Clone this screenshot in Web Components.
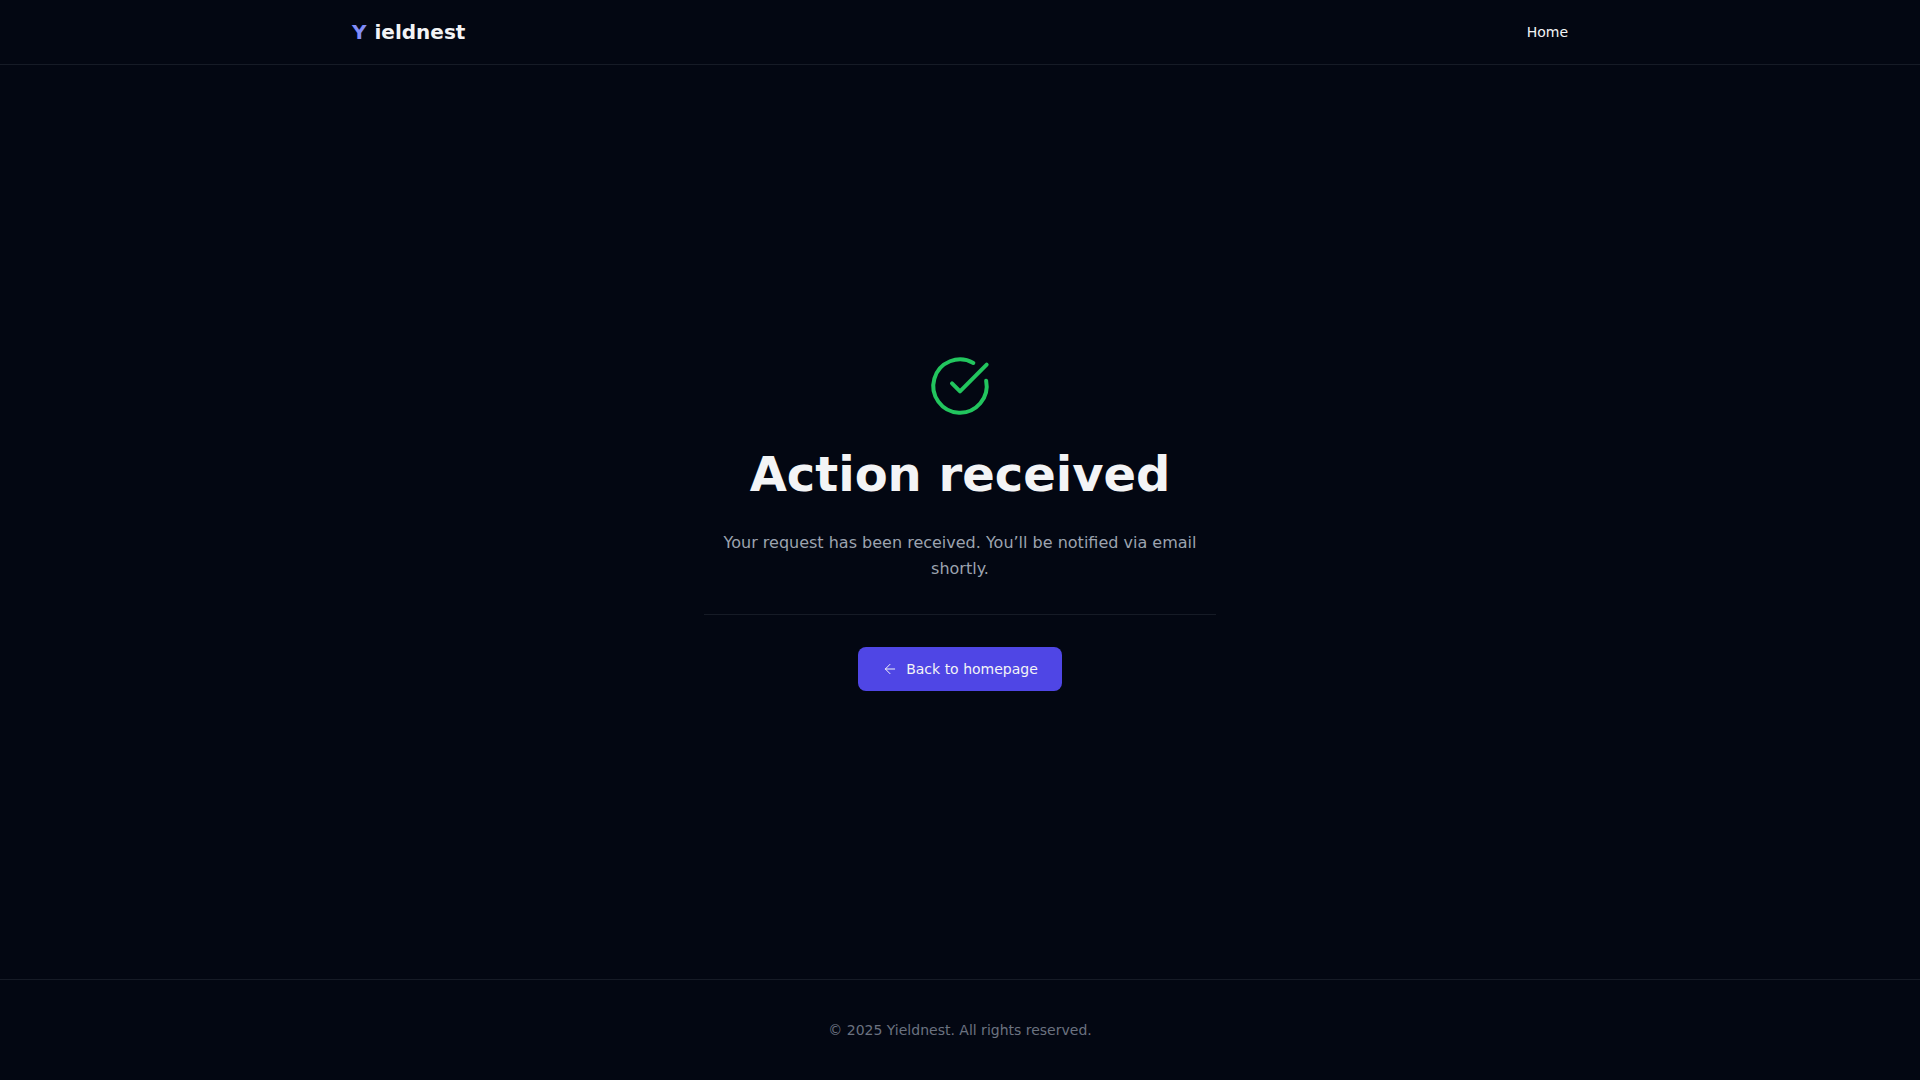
<!DOCTYPE html>
<html lang="en">
<head>
  <meta charset="utf-8">
  <meta name="viewport" content="width=device-width, initial-scale=1">
  <title>Action received - Yieldnest</title>
  <style>
    body {
      --bg: #030712;
      --text: #f3f4f6;
      --muted: #9ca3af;
      --subtle: #6b7280;
      --line: #161b26;
      --brand: #818cf8;
      --primary: #4f46e5;
      --success: #22c55e;
      margin: 0;
      background: var(--bg);
      color: var(--text);
      font-family: "DejaVu Sans", sans-serif;
      font-size: 16px;
    }
  </style>
</head>
<body>
  <page-layout>
    <site-header slot="header">
      <nav-link href="#home">Home</nav-link>
    </site-header>
    <status-message heading="Action received">
      <check-icon slot="icon"></check-icon>
      Your request has been received. You’ll be notified via email shortly.
      <back-button slot="action" href="#home">Back to homepage</back-button>
    </status-message>
    <site-footer slot="footer">© 2025 Yieldnest. All rights reserved.</site-footer>
  </page-layout>

  <script>
    class PageLayout extends HTMLElement {
      constructor() {
        super();
        this.attachShadow({ mode: "open" });
      }

      connectedCallback() {
        this.shadowRoot.innerHTML = /* html */ `
          <style>
            :host {
              display: flex;
              flex-direction: column;
              min-height: 100vh;
            }
            main {
              flex: 1;
              display: flex;
              align-items: center;
              justify-content: center;
              padding-inline: 24px;
            }
          </style>
          <slot name="header"></slot>
          <main><slot></slot></main>
          <slot name="footer"></slot>
        `;
      }
    }

    class SiteHeader extends HTMLElement {
      constructor() {
        super();
        this.attachShadow({ mode: "open" });
      }

      connectedCallback() {
        this.shadowRoot.innerHTML = /* html */ `
          <style>
            :host {
              display: block;
              border-bottom: 1px solid var(--line);
            }
            header {
              box-sizing: border-box;
              display: flex;
              align-items: center;
              justify-content: space-between;
              max-width: 1280px;
              height: 64px;
              margin-inline: auto;
              padding-inline: 32px;
            }
            .logo {
              display: flex;
              gap: 8px;
              color: inherit;
              font-size: 20px;
              line-height: 28px;
              font-weight: 700;
              text-decoration: none;
            }
            .logo span:first-child {
              color: var(--brand);
            }
          </style>
          <header>
            <a class="logo" href="#home"><span>Y</span><span>ieldnest</span></a>
            <nav><slot></slot></nav>
          </header>
        `;
      }
    }

    class NavLink extends HTMLElement {
      constructor() {
        super();
        this.attachShadow({ mode: "open" });
      }

      connectedCallback() {
        this.shadowRoot.innerHTML = /* html */ `
          <style>
            :host {
              display: block;
            }
            a {
              display: block;
              color: inherit;
              font-size: 14px;
              line-height: 20px;
              text-decoration: none;
            }
            a:hover {
              color: var(--brand);
            }
          </style>
          <a href="${this.getAttribute("href")}"><slot></slot></a>
        `;
      }
    }

    class StatusMessage extends HTMLElement {
      constructor() {
        super();
        this.attachShadow({ mode: "open" });
      }

      connectedCallback() {
        this.shadowRoot.innerHTML = /* html */ `
          <style>
            :host {
              display: block;
              width: 100%;
              max-width: 512px;
              text-align: center;
            }
            section {
              display: flex;
              flex-direction: column;
              align-items: center;
              gap: 32px;
            }
            h1, p, hr {
              margin: 0;
            }
            h1 {
              font-size: 48px;
              line-height: 48px;
              font-weight: 700;
            }
            p {
              color: var(--muted);
              line-height: 26px;
            }
            hr {
              align-self: stretch;
              border: 0;
              border-top: 1px solid var(--line);
            }
          </style>
          <section>
            <slot name="icon"></slot>
            <h1>${this.getAttribute("heading")}</h1>
            <p><slot></slot></p>
            <hr>
            <slot name="action"></slot>
          </section>
        `;
      }
    }

    class CheckIcon extends HTMLElement {
      constructor() {
        super();
        this.attachShadow({ mode: "open" });
      }

      connectedCallback() {
        this.shadowRoot.innerHTML = /* html */ `
          <style>
            :host {
              display: block;
              color: var(--success);
            }
            svg {
              display: block;
            }
          </style>
          <svg width="64" height="64" viewBox="0 0 24 24" fill="none" stroke="currentColor"
            stroke-width="1.5" stroke-linecap="round" stroke-linejoin="round" aria-hidden="true">
            <path d="M21.801 10A10 10 0 1 1 17 3.335"/>
            <path d="m9 11 3 3L22 4"/>
          </svg>
        `;
      }
    }

    class BackButton extends HTMLElement {
      constructor() {
        super();
        this.attachShadow({ mode: "open" });
      }

      connectedCallback() {
        this.shadowRoot.innerHTML = /* html */ `
          <style>
            :host {
              display: block;
            }
            a {
              display: flex;
              align-items: center;
              gap: 8px;
              padding: 12px 24px;
              border-radius: 8px;
              background: var(--primary);
              color: inherit;
              font-size: 14px;
              line-height: 20px;
              text-decoration: none;
            }
            a:hover {
              background: #6366f1;
            }
          </style>
          <a href="${this.getAttribute("href")}">
            <svg width="16" height="16" viewBox="0 0 24 24" fill="none" stroke="currentColor"
              stroke-width="1.5" stroke-linecap="round" stroke-linejoin="round" aria-hidden="true">
              <path d="m12 19-7-7 7-7"/>
              <path d="M19 12H5"/>
            </svg>
            <slot></slot>
          </a>
        `;
      }
    }

    class SiteFooter extends HTMLElement {
      constructor() {
        super();
        this.attachShadow({ mode: "open" });
      }

      connectedCallback() {
        this.shadowRoot.innerHTML = /* html */ `
          <style>
            :host {
              display: block;
              border-top: 1px solid var(--line);
            }
            footer {
              padding: 40px 24px;
              color: var(--subtle);
              font-size: 14px;
              line-height: 20px;
              text-align: center;
            }
          </style>
          <footer><slot></slot></footer>
        `;
      }
    }

    customElements.define("page-layout", PageLayout);
    customElements.define("site-header", SiteHeader);
    customElements.define("nav-link", NavLink);
    customElements.define("status-message", StatusMessage);
    customElements.define("check-icon", CheckIcon);
    customElements.define("back-button", BackButton);
    customElements.define("site-footer", SiteFooter);
  </script>
</body>
</html>
